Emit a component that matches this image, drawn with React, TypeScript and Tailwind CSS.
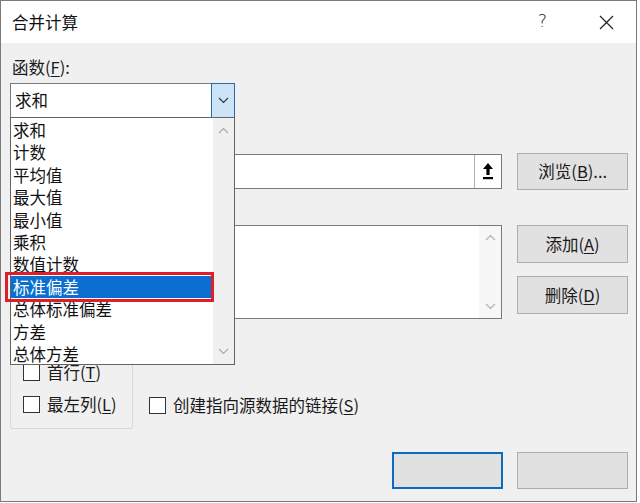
import React from "react";

const items = [
  "求和",
  "计数",
  "平均值",
  "最大值",
  "最小值",
  "乘积",
  "数值计数",
  "标准偏差",
  "总体标准偏差",
  "方差",
  "总体方差",
];

function ChevronDown({ color = "#333" }: { color?: string }) {
  return (
    <svg width="11" height="7" viewBox="0 0 11 7">
      <path d="M1 1 L5.5 5.5 L10 1" fill="none" stroke={color} strokeWidth="1.1" />
    </svg>
  );
}
function ChevronUp({ color = "#333" }: { color?: string }) {
  return (
    <svg width="11" height="7" viewBox="0 0 11 7">
      <path d="M1 6 L5.5 1.5 L10 6" fill="none" stroke={color} strokeWidth="1.1" />
    </svg>
  );
}

function Check({ label, u }: { label: string; u: string }) {
  return (
    <div className="flex items-center gap-[7px] h-[22px]">
      <div className="w-[17px] h-[17px] border border-[#333] bg-white shrink-0" />
      <span className="text-[16.5px] leading-[16px] text-[#1a1a1a]">
        {label}(<span className="underline underline-offset-2">{u}</span>)
      </span>
    </div>
  );
}

function Btn({ children, className = "" }: { children?: React.ReactNode; className?: string }) {
  return (
    <div
      className={
        "flex items-center justify-center bg-[#e1e1e1] border border-[#adadad] text-[16.5px] text-[#1a1a1a] " +
        className
      }
    >
      {children}
    </div>
  );
}

export default function App() {
  return (
    <div className="relative w-[640px] h-[503px] bg-white overflow-hidden font-['Noto_Sans_CJK_SC','Microsoft_YaHei',sans-serif]">
      <div className="w-[637px] h-[502px] border border-[#7a7a7a] flex flex-col bg-[#f0f0f0]">
        {/* title bar */}
        <div className="h-[42px] bg-white flex items-center pl-[11px] pr-[22px] shrink-0">
          <span className="text-[16.5px] text-[#111]">合并计算</span>
          <span className="ml-auto text-[17px] text-[#222] mr-[52px] font-['DejaVu_Sans',sans-serif] font-light">?</span>
          <svg width="15" height="15" viewBox="0 0 15 15">
            <path d="M1 1 L14 14 M14 1 L1 14" stroke="#222" strokeWidth="1.2" />
          </svg>
        </div>
        {/* body */}
        <div className="flex flex-col pl-[9px] pr-[8px]">
          <div className="mt-[13px] h-[22px] text-[16.5px] leading-[22px] text-[#1a1a1a] pl-[2px]">
            函数(<span className="underline underline-offset-2">F</span>):
          </div>
          {/* combo */}
          <div className="mt-[5px] w-[225px] h-[35px] bg-white border border-[#7a7a7a] flex">
            <div className="flex-1 flex items-center pl-[4px] text-[16.5px] text-[#111]">求和</div>
            <div className="w-[24px] -my-px -mr-px bg-[#cce4f7] border border-[#2d6a9e] flex items-center justify-center">
              <ChevronDown />
            </div>
          </div>
          {/* reference input (label hidden behind the open list) */}
          <div className="mt-[8px] h-[22px]" />
          <div className="mt-[5px] flex items-center h-[36px]">
            <div className="w-[494px] h-[35px] bg-white border border-[#7a7a7a] flex justify-end">
              <div className="w-[27px] h-full border-l border-[#adadad] bg-white flex items-center justify-center">
                <svg width="12" height="18" viewBox="0 0 12 18">
                  <path d="M6 1 L11 7 L7.6 7 L7.6 13 L4.4 13 L4.4 7 L1 7 Z" fill="#000" />
                  <rect x="1" y="15" width="10" height="2.2" fill="#000" />
                </svg>
              </div>
            </div>
            <Btn className="ml-[15px] w-[111px] h-[37px]">
              浏览(<span className="underline underline-offset-2">B</span>)...
            </Btn>
          </div>
          {/* all references */}
          <div className="mt-[8px] h-[22px]" />
          <div className="mt-[6px] flex items-start">
            <div className="w-[494px] h-[94px] bg-white border border-[#7a7a7a] flex justify-end">
              <div className="w-[22px] h-full bg-[#f7f7f7] flex flex-col items-center justify-between py-[8px]">
                <ChevronUp color="#b0b0b0" />
                <ChevronDown color="#b0b0b0" />
              </div>
            </div>
            <div className="ml-[15px] flex flex-col gap-[13px]">
              <Btn className="w-[111px] h-[38px]">
                添加(<span className="underline underline-offset-2">A</span>)
              </Btn>
              <Btn className="w-[111px] h-[38px]">
                删除(<span className="underline underline-offset-2">D</span>)
              </Btn>
            </div>
          </div>
          {/* label options */}
          <div className="mt-[10px] flex items-end">
            <div className="w-[123px] h-[100px] border border-[#d9d9d9] rounded-[2px] flex flex-col justify-end gap-[10px] pl-[12px] pb-[13px]">
              <Check label="首行" u="T" />
              <Check label="最左列" u="L" />
            </div>
            <div className="ml-[16px] mb-[13px]">
              <Check label="创建指向源数据的链接" u="S" />
            </div>
          </div>
          {/* bottom buttons */}
          <div className="mt-[23px] flex justify-end gap-[14px]">
            <div className="w-[111px] h-[37px] bg-[#e1e1e1] border-2 border-[#0a6cc0]" />
            <Btn className="w-[111px] h-[37px]" />
          </div>
        </div>
      </div>

      {/* open dropdown list overlay */}
      <div className="absolute left-[10px] top-[117px] w-[225px] h-[248px] bg-white border border-[#646464] flex">
        <div className="flex-1 flex flex-col pt-[1px]">
          {items.map((it) => (
            <div
              key={it}
              className={
                "h-[22.4px] leading-[22.4px] text-[16.5px] pl-[2px] whitespace-nowrap " +
                (it === "标准偏差" ? "bg-[#0a6fd0] text-white" : "text-[#111]")
              }
            >
              {it}
            </div>
          ))}
        </div>
        <div className="w-[21px] h-full bg-[#f0f0f0] flex flex-col items-center justify-between py-[9px]">
          <ChevronUp color="#a8a8a8" />
          <ChevronDown color="#a8a8a8" />
        </div>
      </div>
      {/* red annotation frame */}
      <div className="absolute left-[5px] top-[272px] w-[209px] h-[30px] border-[3px] border-[#dc1f2a]" />
    </div>
  );
}
